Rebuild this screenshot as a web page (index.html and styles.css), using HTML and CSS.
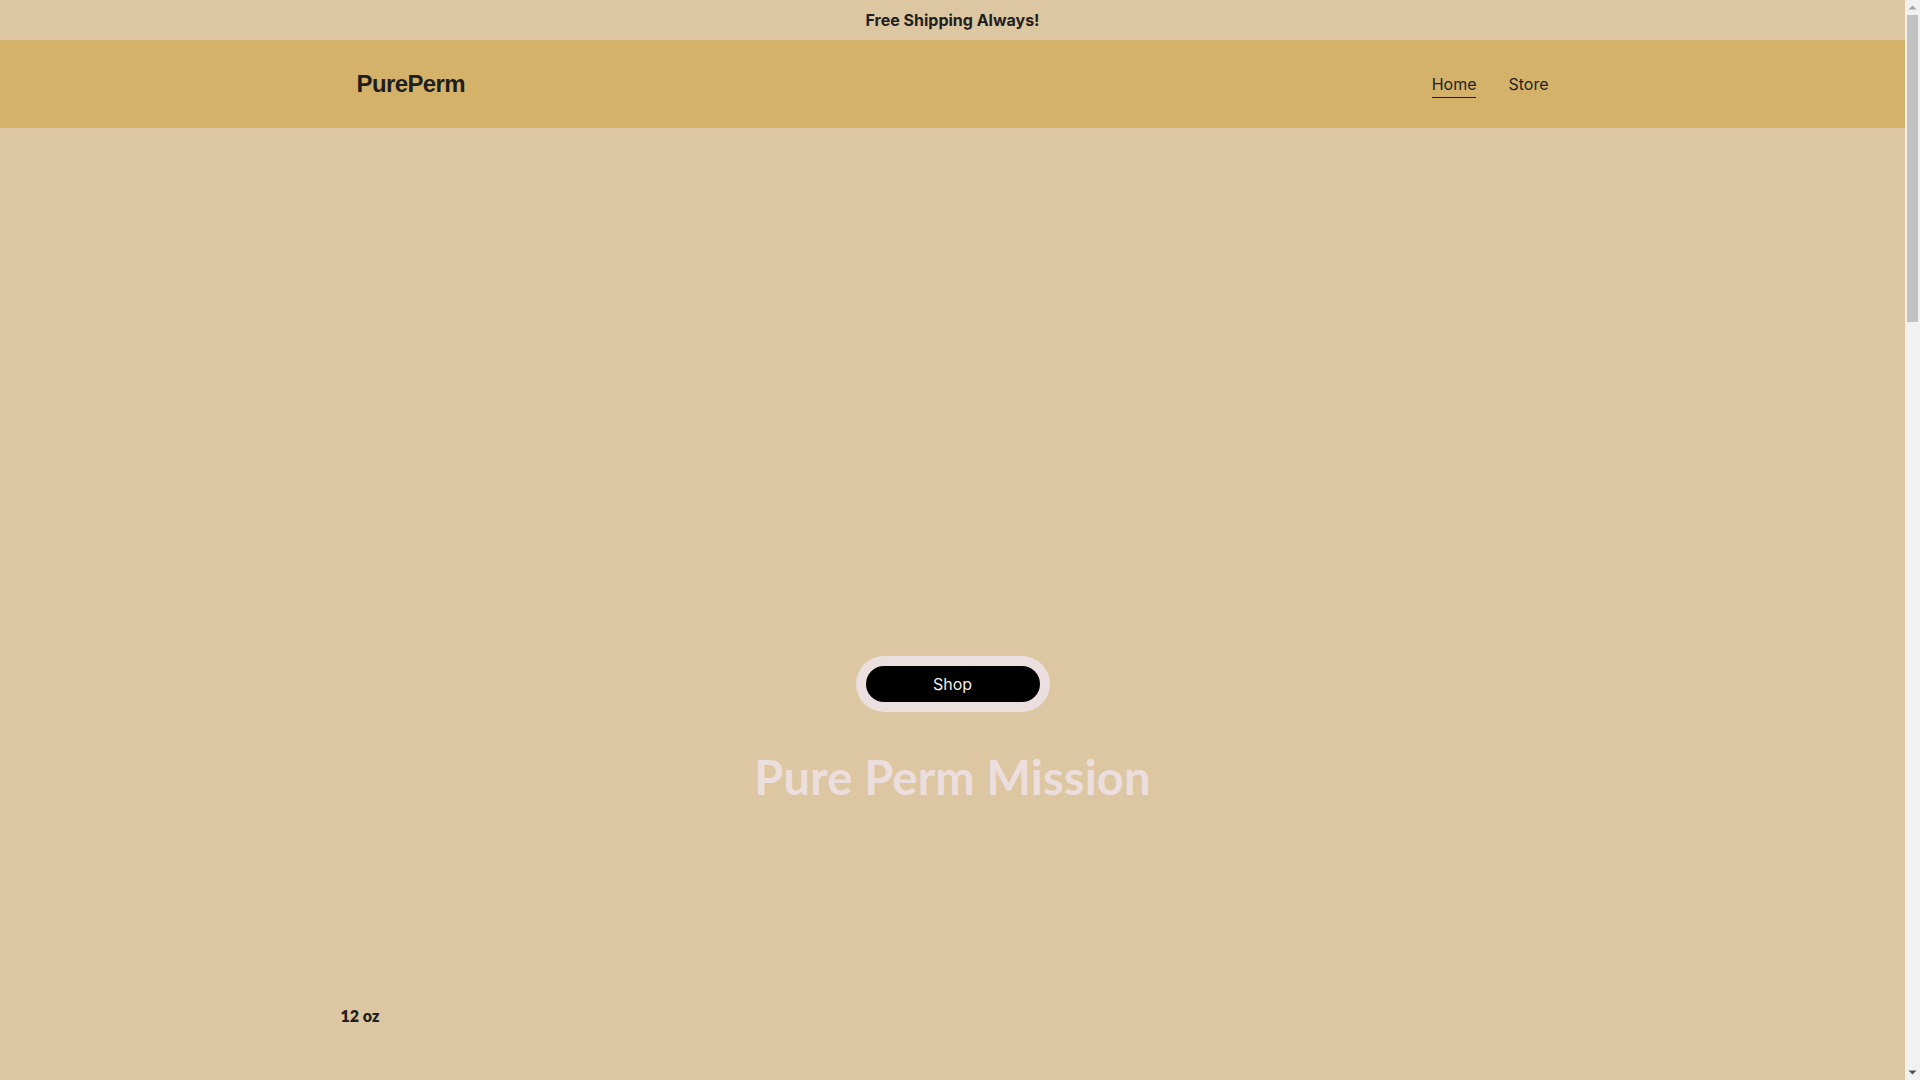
FILE: index.html
```html
<!DOCTYPE html>
<html lang="en">
<head>
<meta charset="utf-8">
<title>PurePerm</title>
<link rel="stylesheet" href="styles.css">
</head>
<body>
  <div class="page">
    <div class="announce">Free Shipping Always!</div>
    <header class="site-header">
      <div class="container header-inner">
        <a class="logo" href="#">PurePerm</a>
        <nav class="nav">
          <a class="nav-link active" href="#">Home</a>
          <a class="nav-link" href="#">Store</a>
        </nav>
      </div>
    </header>
    <main>
      <section class="hero">
        <div class="btn-ring">
          <a class="btn-shop" href="#">Shop</a>
        </div>
        <h1 class="hero-title">Pure Perm Mission</h1>
      </section>
      <section class="products">
        <div class="products-inner">
          <div class="product-size">12 oz</div>
        </div>
      </section>
    </main>
  </div>
  <div class="scrollbar" aria-hidden="true">
    <svg class="arrow" width="15" height="15" viewBox="0 0 15 15"><path d="M3.5 9.5 L7.5 5.5 L11.5 9.5 Z" fill="#a3a3a3"/></svg>
    <div class="track"><div class="thumb"></div></div>
    <svg class="arrow" width="15" height="15" viewBox="0 0 15 15"><path d="M3.5 5.5 L7.5 9.5 L11.5 5.5 Z" fill="#505050"/></svg>
  </div>
</body>
</html>
```
FILE: styles.css
```css
* { box-sizing: border-box; }
html, body { margin: 0; padding: 0; }
body {
  background: #dcc7a2;
  font-family: "Inter", "Liberation Sans", sans-serif;
  color: #1e1e1e;
}
a { color: inherit; text-decoration: none; }

.page {
  margin-right: 15px;
  min-height: 3700px;
}

.announce {
  height: 40px;
  display: flex;
  align-items: center;
  justify-content: center;
  font-weight: 700;
  font-size: 16px;
  color: #1f1f1f;
  background: #dcc7a2;
}

.site-header {
  background: #d4b26a;
  height: 88px;
}
.container {
  max-width: 1192px;
  margin: 0 auto;
}
.header-inner {
  height: 100%;
  display: flex;
  align-items: center;
  justify-content: space-between;
}
.logo {
  font-family: "Liberation Sans", Arial, sans-serif;
  font-weight: 700;
  font-size: 24px;
  letter-spacing: -0.6px;
  color: #1f1f1f;
}
.nav {
  display: flex;
  gap: 32px;
  padding-top: 4px;
}
.nav-link {
  font-size: 16px;
  color: #222;
  padding-bottom: 3px;
  border-bottom: 1px solid transparent;
}
.nav-link.active { border-bottom-color: #1a1a1a; }

.hero {
  display: flex;
  flex-direction: column;
  align-items: center;
  padding-top: 528px;
}
.btn-ring {
  background: #ecdfdf;
  padding: 10px;
  border-radius: 28px;
}
.btn-shop {
  display: flex;
  align-items: center;
  justify-content: center;
  width: 174px;
  height: 36px;
  background: #000;
  color: #f2ebeb;
  border-radius: 18px;
  font-size: 16px;
}
.hero-title {
  margin: 37px 0 0;
  font-family: "Lato", "Open Sans", sans-serif;
  font-weight: 700;
  font-size: 47px;
  line-height: 1.2;
  letter-spacing: 0.2px;
  color: #ecdedd;
}

.products {
  padding-top: 201px;
}
.products-inner {
  max-width: 1224px;
  margin: 0 auto;
}
.product-size {
  font-family: "Lato", sans-serif;
  font-weight: 800;
  font-size: 16px;
  line-height: 1.2;
  color: #1f1f1f;
}

.scrollbar {
  position: fixed;
  top: 0;
  right: 0;
  width: 15px;
  height: 100vh;
  background: #f1f1f1;
  display: flex;
  flex-direction: column;
}
.scrollbar .arrow { display: block; flex: none; }
.scrollbar .track {
  flex: 1;
  padding: 0 2px;
}
.scrollbar .thumb {
  height: 307px;
  background: #c1c1c1;
}
```
